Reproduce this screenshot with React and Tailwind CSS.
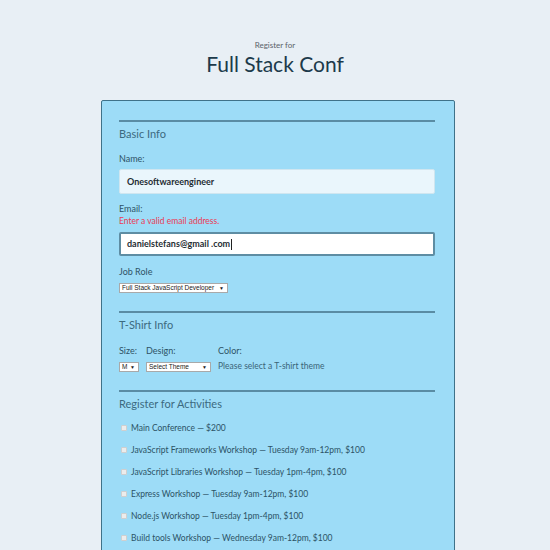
import React from 'react'

const activities = [
  'Main Conference — $200',
  'JavaScript Frameworks Workshop — Tuesday 9am-12pm, $100',
  'JavaScript Libraries Workshop — Tuesday 1pm-4pm, $100',
  'Express Workshop — Tuesday 9am-12pm, $100',
  'Node.js Workshop — Tuesday 1pm-4pm, $100',
  'Build tools Workshop — Wednesday 9am-12pm, $100',
]

function FakeSelect({ label, width }) {
  return (
    <div
      className={`flex items-center justify-between h-[10px] whitespace-nowrap bg-white border border-[#a9a9a9] pl-[2px] pr-[3px] text-[6.5px] leading-none text-[#222] font-['Liberation_Sans',sans-serif] ${width}`}
    >
      <span>{label}</span>
      <span className="text-[5px]">▼</span>
    </div>
  )
}

function SectionHeading({ children }) {
  return (
    <>
      <div className="h-[2px] bg-[#5a8ca4]" />
      <h2 className="mt-[5px] text-[11px] leading-[14px] text-[#3c6a80]">{children}</h2>
    </>
  )
}

export default function App() {
  return (
    <div className="min-h-[550px] w-[550px] overflow-hidden bg-[#e8eff5] font-['Lato','Open_Sans',sans-serif]">
      {/* Header */}
      <header className="pt-[40px] text-center">
        <p className="text-[8px] leading-[10px] text-[#5a6269]">Register for</p>
        <h1 className="mt-[2px] text-[21px] leading-[24px] text-[#1c3a4b]">Full Stack Conf</h1>
      </header>

      {/* Form card */}
      <form className="mt-[24px] ml-[101px] w-[354px] h-[460px] rounded-[2px] border border-[#3f7289] bg-[#9ddcf7] pl-[17px] pr-[19px] pt-[19px]">
        <SectionHeading>Basic Info</SectionHeading>

        <label className="block mt-[12px] text-[9px] leading-[12px] text-[#2e5366]">Name:</label>
        <div className="mt-[4px] h-[25px] flex items-center rounded-[2px] border border-[#cfe6f0] bg-[#eaf6fc] px-[7px] text-[9px] font-bold text-[#1f2d33]">
          Onesoftwareengineer
        </div>

        <label className="block mt-[9px] text-[9px] leading-[12px] text-[#2e5366]">Email:</label>
        <p className="text-[8.5px] leading-[12px] text-[#ec3a55]">Enter a valid email address.</p>
        <div className="mt-[5px] h-[24px] flex items-center rounded-[2px] border-2 border-[#5e8da3] bg-white px-[6px] text-[9px] font-bold text-[#1f2d33]">
          danielstefans@gmail .com
          <span className="ml-[1px] w-px h-[11px] bg-[#222]" />
        </div>

        <label className="block mt-[10px] text-[9px] leading-[12px] text-[#2e5366]">Job Role</label>
        <div className="mt-[5px]">
          <FakeSelect label="Full Stack JavaScript Developer" width="w-[109px]" />
        </div>

        <div className="mt-[18px]">
          <SectionHeading>T-Shirt Info</SectionHeading>
        </div>

        <div className="mt-[13px] flex gap-[7px]">
          <div>
            <p className="text-[9px] leading-[12px] text-[#2e5366]">Size:</p>
            <div className="mt-[5px]">
              <FakeSelect label="M" width="w-[20px]" />
            </div>
          </div>
          <div>
            <p className="text-[9px] leading-[12px] text-[#2e5366]">Design:</p>
            <div className="mt-[5px]">
              <FakeSelect label="Select Theme" width="w-[65px]" />
            </div>
          </div>
          <div>
            <p className="text-[9px] leading-[12px] text-[#2e5366]">Color:</p>
            <p className="mt-[3px] text-[8.5px] leading-[12px] text-[#3b6478]">Please select a T-shirt theme</p>
          </div>
        </div>

        <div className="mt-[18px]">
          <SectionHeading>Register for Activities</SectionHeading>
        </div>

        <ul className="mt-[11px] flex flex-col gap-[10px]">
          {activities.map(a => (
            <li key={a} className="flex items-center gap-[4px] pl-[2px] text-[8.5px] leading-[12px] text-[#2c5366]">
              <span className="w-[6px] h-[6px] rounded-[1px] border border-[#cfcfcf] bg-[#ececec]" />
              {a}
            </li>
          ))}
        </ul>
      </form>
    </div>
  )
}
